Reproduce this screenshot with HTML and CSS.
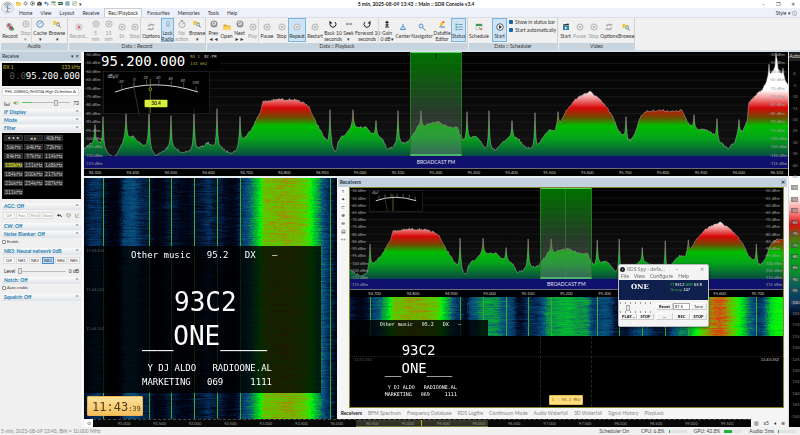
FILE: index.html
```html
<!DOCTYPE html>
<html lang="en">
<head>
    <meta charset="UTF-8">
    <meta name="viewport" content="width=device-width, initial-scale=1.0">
    <title>SDR Console</title>
    <link rel="stylesheet" href="styles.css">
</head>
<body>
    <svg class="defs" aria-hidden="true">
        <symbol id="i-disc" viewBox="0 0 16 16"><circle cx="8" cy="8" r="7" fill="#c4c4c4"/><circle cx="8" cy="8" r="5" fill="#f1f1f1" stroke="#aaa"/><rect x="6" y="6" width="4" height="4" fill="#bbb"/></symbol>
        <symbol id="i-dark" viewBox="0 0 16 16"><circle cx="8" cy="8" r="7" fill="#909090"/><circle cx="8" cy="7" r="4" fill="#eee"/><path d="M5 7l4-3v6z" fill="#888"/></symbol>
        <symbol id="i-rec" viewBox="0 0 16 16"><circle cx="8" cy="8" r="7" fill="#c4c4c4"/><circle cx="8" cy="8" r="5" fill="#eee"/><circle cx="8" cy="8" r="3" fill="#d66"/></symbol>
        <symbol id="i-recs" viewBox="0 0 16 16"><circle cx="6" cy="5" r="5" fill="#999"/><circle cx="6" cy="5" r="2" fill="#c22"/><circle cx="10" cy="10" r="5" fill="#777" stroke="#eee"/><circle cx="10" cy="10" r="2" fill="#e22"/><path d="M10 14h5v-4" stroke="#2a4" stroke-width="2" fill="none"/></symbol>
        <symbol id="i-clock" viewBox="0 0 16 16"><circle cx="8" cy="8" r="6.500" fill="#eef6fd" stroke="#5a8fbe" stroke-width="2"/><path d="M8 8l3-4M8 8H5" stroke="#357" fill="none"/></symbol>
        <symbol id="i-gclock" viewBox="0 0 16 16"><circle cx="8" cy="9" r="6" fill="#eee" stroke="#aaa" stroke-width="2"/><path d="M8 9l3-3M6 1h4" stroke="#999" stroke-width="2" fill="none"/></symbol>
        <symbol id="i-browse" viewBox="0 0 16 16"><path d="M1 2h5l1 2h6v6H1z" fill="#f1c232"/><path d="M5 5h9l-3 6H4z" fill="#ffdf70"/><circle cx="10" cy="9" r="3" fill="#cfe6fa" stroke="#48c" stroke-width="1.500"/><path d="M12 11l3 4" stroke="#a63" stroke-width="2"/></symbol>
        <symbol id="i-folder" viewBox="0 0 16 16"><path d="M1 3h5l2 2h7v9H1z" fill="#e0a82c"/><path d="M1 7h14v7H1z" fill="#ffd35c"/></symbol>
        <symbol id="i-loop" viewBox="0 0 16 16"><path d="M3 7a5 5 0 0 1 9-2M13 9a5 5 0 0 1-9 2" fill="none" stroke="#aaa" stroke-width="3"/><path d="M10 5h5V1zM6 11H1v4z" fill="#aaa"/></symbol>
        <symbol id="i-lock" viewBox="0 0 16 16"><path d="M5 8V5a3 3 0 0 1 6 0v3" fill="none" stroke="#9bb" stroke-width="2"/><rect x="4" y="7" width="8" height="7" fill="#adc3d0"/></symbol>
        <symbol id="i-ccw" viewBox="0 0 16 16"><path d="M4 4a6 6 0 1 0 8 0" fill="none" stroke="#222" stroke-width="2"/><path d="M1 1v6h6z" fill="#222"/></symbol>
        <symbol id="i-cw" viewBox="0 0 16 16"><path d="M12 4a6 6 0 1 1-8 0" fill="none" stroke="#222" stroke-width="2"/><path d="M15 1v6H9z" fill="#222"/></symbol>
        <symbol id="i-seek" viewBox="0 0 16 16"><path d="M1 8l4-3v6zM15 8l-4-3v6z" fill="#888"/><path d="M4 8h8" stroke="#888" stroke-width="2"/></symbol>
        <symbol id="i-gain" viewBox="0 0 16 16"><path d="M8 1l4 5H9v3h3l-4 4-4-4h3V6H4z" fill="#222"/><path d="M4 14h8" stroke="#222" stroke-width="2"/></symbol>
        <symbol id="i-center" viewBox="0 0 16 16"><path d="M8 2v7M2 13c3 0 3-7 6-7s3 7 6 7z" stroke="#5b9bd5" fill="#cfe2f5" stroke-width="2"/></symbol>
        <symbol id="i-find" viewBox="0 0 16 16"><circle cx="6" cy="6" r="4" fill="#d8ebfa" stroke="#5b9bd5" stroke-width="2"/><path d="M9 9l6 6" stroke="#5577a0" stroke-width="2"/></symbol>
        <symbol id="i-edit" viewBox="0 0 16 16"><path d="M3 13l2-7 6-4 2 2-5 8z" fill="#f6c026"/><path d="M3 14h11" stroke="#38b" stroke-width="2"/><circle cx="11" cy="4" r="2" fill="#e55"/></symbol>
        <symbol id="i-status" viewBox="0 0 16 16"><path d="M1 3h4M1 8h4M1 13h4" stroke="#4a8" stroke-width="3"/><path d="M7 3h8M7 8h8M7 13h8" stroke="#79b" stroke-width="2"/></symbol>
        <symbol id="i-cal" viewBox="0 0 16 16"><path d="M2 2h12v11H2z" fill="#e8f0e8" stroke="#8a8"/><path d="M2 2h12v4H2z" fill="#3b9a55"/><path d="M8 9l6 5" stroke="#c44" stroke-width="2"/></symbol>
        <symbol id="i-play" viewBox="0 0 16 16"><circle cx="8" cy="8" r="6.500" fill="#fff" stroke="#333" stroke-width="1.500"/><path d="M6 4l6 4-6 4z" fill="#333"/></symbol>
        <symbol id="i-film" viewBox="0 0 16 16"><path d="M2 5h12v9H2z" fill="#347ba0"/><path d="M2 3l11-2 1 3-12 1z" fill="#233"/><path d="M6 7l5 3-5 3z" fill="#cfe"/></symbol>
        <symbol id="i-gear" viewBox="0 0 16 16"><circle cx="8" cy="8" r="5" fill="none" stroke="#666" stroke-width="3" stroke-dasharray="3 1"/><circle cx="8" cy="8" r="3" fill="none" stroke="#666"/></symbol>
    </svg>

    <header class="titlebar">
        <div class="quick">
            <svg><use href="#i-folder"/></svg>
            <svg><use href="#i-gear"/></svg>
            <svg><use href="#i-play"/></svg>
            <svg viewBox="0 0 16 16"><path d="M1 5h3l2-3h4l2 3h3v9H1z" fill="#333"/><circle cx="8" cy="9" r="3" fill="#999"/></svg>
            <svg viewBox="0 0 16 16"><path d="M4 6h5a4 4 0 0 1 0 8" fill="none" stroke="#2a6fb5" stroke-width="3"/><path d="M0 6l6-5v10z" fill="#2a6fb5"/></svg>
            <svg><use href="#i-cal"/></svg>
            <svg viewBox="0 0 16 16"><path d="M1 3h14v10H1z" fill="#265b48"/><path d="M4 6h8v4H4z" fill="#9cd0b0"/></svg>
            <svg class="hot"><use href="#i-gear"/></svg>
            <svg viewBox="0 0 16 16"><path d="M2 2h12v12H2z" fill="#fff" stroke="#555"/><path d="M4 12l3-5 2 2 3-5" fill="none" stroke="#285" stroke-width="2"/></svg>
            <span>▾</span>
        </div>
        <h1>5 min, 2025-08-09 13:43 :: Main :: SDR Console v3.4</h1>
        <div class="winbtns">
            <button aria-label="Minimize">–</button>
            <button aria-label="Restore">❐</button>
            <button aria-label="Close">✕</button>
        </div>
    </header>

    <nav class="menu">
        <a href="#">Home</a>
        <a href="#">View</a>
        <a href="#">Layout</a>
        <a href="#">Receive</a>
        <a href="#" class="active">Rec/Playback</a>
        <a href="#">Favourites</a>
        <a href="#">Memories</a>
        <a href="#">Tools</a>
        <a href="#">Help</a>
        <button class="style-btn">Style ▾ ⓘ</button>
    </nav>
    <svg class="orb" viewBox="0 0 28 28"><circle cx="14" cy="14" r="13" fill="#e9e9ec" stroke="#b8b8be"/><path d="M14 23V9M10 23h8M9 10a6 6 0 0 1 10 0M6 9a9 9 0 0 1 16 0" stroke="#8c9298" stroke-width="2" fill="none"/><path d="M9 13h7M15 16h5" stroke="#5aa3d0" stroke-width="2"/></svg>

    <section class="ribbon">
        <div class="group audio">
            <div class="tools">
                <button class="w18"><svg><use href="#i-recs"/></svg>Record</button>
                <button class="w13 off"><svg><use href="#i-disc"/></svg>Stop<br>▾</button>
                <button class="w16 sep"><svg><use href="#i-clock"/></svg>Cache<br>▾</button>
                <button class="w18"><svg><use href="#i-browse"/></svg>Browse<br>▾</button>
            </div>
            <footer>Audio</footer>
        </div>
        <div class="group record">
            <div class="tools">
                <button class="w20 off"><svg><use href="#i-rec"/></svg>Record...</button>
                <button class="w13 off"><svg><use href="#i-disc"/></svg>5<br>min</button>
                <button class="w13 off"><svg><use href="#i-disc"/></svg>15<br>min</button>
                <button class="w13 off"><svg><use href="#i-disc"/></svg>1h</button>
                <button class="w13 off"><svg><use href="#i-disc"/></svg>Stop</button>
                <button class="w20 sep"><svg><use href="#i-loop"/></svg>Options</button>
                <button class="w13 on"><svg><use href="#i-lock"/></svg>Lock<br>Radio</button>
                <button class="w15 off"><svg><use href="#i-gclock"/></svg>No<br>action</button>
                <button class="w16"><svg><use href="#i-browse"/></svg>Browse<br>▾</button>
            </div>
            <footer>Data :: Record</footer>
        </div>
        <div class="group playback">
            <div class="tools">
                <button class="w13"><svg><use href="#i-dark"/></svg>Prev<br>◄◄</button>
                <button class="w13"><svg><use href="#i-folder"/></svg>Open</button>
                <button class="w13"><svg><use href="#i-dark"/></svg>Next<br>►►</button>
                <button class="w13 off"><svg><use href="#i-disc"/></svg>Play</button>
                <button class="w16 sep"><svg><use href="#i-disc"/></svg>Pause</button>
                <button class="w13"><svg><use href="#i-disc"/></svg>Stop</button>
                <button class="w18 on"><svg><use href="#i-disc"/></svg>Repeat</button>
                <button class="w18"><svg><use href="#i-disc"/></svg>Restart</button>
                <button class="w18"><svg><use href="#i-ccw"/></svg>Back 10<br>seconds</button>
                <button class="w13"><svg><use href="#i-seek"/></svg>Seek<br>▾</button>
                <button class="w24"><svg><use href="#i-cw"/></svg>Forward 10<br>seconds</button>
                <button class="w16 sep"><svg><use href="#i-gain"/></svg>Gain<br>0 dB▾</button>
                <button class="w16"><svg><use href="#i-center"/></svg>Center</button>
                <button class="w22"><svg><use href="#i-find"/></svg>Navigator</button>
                <button class="w18"><svg><use href="#i-edit"/></svg>Datafile<br>Editor</button>
                <button class="w15 on"><svg><use href="#i-status"/></svg>Status</button>
            </div>
            <footer>Data :: Playback</footer>
        </div>
        <div class="group scheduler">
            <div class="tools">
                <button class="w20"><svg><use href="#i-cal"/></svg>Schedule</button>
                <button class="w15 on gap"><svg><use href="#i-play"/></svg>Start</button>
                <div class="checks">
                    <label><input type="checkbox" checked>Show in status bar</label>
                    <label><input type="checkbox" checked>Start automatically</label>
                </div>
            </div>
            <footer>Data :: Scheduler</footer>
        </div>
        <div class="group video">
            <div class="tools">
                <button class="w13"><svg><use href="#i-film"/></svg>Start</button>
                <button class="w15 off"><svg><use href="#i-disc"/></svg>Pause</button>
                <button class="w13 off"><svg><use href="#i-disc"/></svg>Stop</button>
                <button class="w18"><svg><use href="#i-loop"/></svg>Options</button>
                <button class="w16"><svg><use href="#i-browse"/></svg>Browse</button>
            </div>
            <footer>Video</footer>
        </div>
    </section>

    <main class="workspace">
        <aside class="sidebar">
            <h2 class="pane-title">Receive <span>▾ ✕</span></h2>
            <div class="lcd">
                <div class="lcd-top"><span>RX 1</span><span>133 kHz</span></div>
                <div class="lcd-freq"><i>0.0</i>95.200.000</div>
            </div>
            <select class="device" aria-label="Audio device"><option>PHL 328B6Q (NVIDIA High Definition Audio)</option></select>
            <div class="volume">
                <svg viewBox="0 0 16 16"><path d="M2 14V5M6 14V9M10 14v-3M14 14V7M1 14h14" stroke="#666" stroke-width="2"/></svg>
                <svg viewBox="0 0 16 16"><path d="M1 6h4l4-4v12l-4-4H1z" fill="#8a9a60"/><path d="M11 5q3 3 0 6M13 3q4 5 0 10" fill="none" stroke="#8b4"/></svg>
                <input type="range" min="0" max="100" value="73" aria-label="Volume">
                <span>73</span>
            </div>
            <h3>IF Display <span>⌃</span></h3>
            <h3>Mode <span>⌃</span></h3>
            <h3>Filter <span>⌃</span></h3>
            <div class="filters">
                <button>• • •</button><button>◂ ▸</button><button>40kHz</button>
                <button>56kHz</button><button>64kHz</button><button>72kHz</button>
                <button>84kHz</button><button>97kHz</button><button>114kHz</button>
                <button class="sel">133kHz</button><button>151kHz</button><button>168kHz</button>
                <button>184kHz</button><button>200kHz</button><button>217kHz</button>
                <button>236kHz</button><button>254kHz</button><button>287kHz</button>
                <button>311kHz</button>
            </div>
            <h3>AGC: Off <span>⌃</span></h3>
            <div class="opts agc">
                <button>Off</button><button>Fast</button><button>Med</button><button>Slow</button>
                <svg viewBox="0 0 16 16"><path d="M5 7h5q4 0 4 6" fill="none" stroke="#222" stroke-width="3"/><path d="M0 7l6-5v10z" fill="#222"/></svg>
                <svg viewBox="0 0 16 16"><path d="M2 3h12v7H2zM6 14h4" fill="none" stroke="#888" stroke-width="2"/></svg>
                <svg viewBox="0 0 16 16"><path d="M2 2v12h12M5 11l8-9" fill="none" stroke="#888" stroke-width="2"/></svg>
            </div>
            <h3>CW: Off <span>⌃</span></h3>
            <h3>Noise Blanker: Off <span>⌃</span></h3>
            <label class="tick"><input type="checkbox">Enable</label>
            <h3>NR3: Neural network 0dB <span>⌃</span></h3>
            <div class="opts">
                <button>Off</button><button>NR1</button><button>NR2</button><button class="sel">NR3</button><button>NR4</button><button>NR5</button>
            </div>
            <div class="level">
                <label for="level">Level</label>
                <input id="level" type="range" min="0" max="100" value="0">
                <span>0 dB</span>
            </div>
            <h3>Notch: Off <span>⌃</span></h3>
            <label class="tick"><input type="checkbox">Auto enable</label>
            <h3>Squelch: Off <span>⌃</span></h3>
        </aside>

        <section class="content">
            <div class="display upper">
                <div class="plot" data-from="0" data-span="704">
                    <svg class="trace" preserveAspectRatio="none"></svg>
                    <div class="band">BROADCAST FM</div>
                    <div class="passband"><b>1</b></div>
                    <div class="dbm"></div>
                    <div class="dbm right"></div>
                    <div class="readout">
                        <strong>95.200.000</strong>
                        <div><p>RX 1 <em>BC-FM</em></p><p>133 kHz</p></div>
                    </div>
                    <svg class="meter" viewBox="0 0 107 43">
                        <path d="M10 21Q51 6 97 21" fill="none" stroke="#ddd"/>
                        <path d="M17 18v-5M30 15v-5M43 13V8M56 13V8M69 14V9M82 16v-5M95 20v-5" stroke="#999" stroke-width=".5"/>
                        <path d="M29 12l6 31" stroke="#666" stroke-width=".5"/>
                        <path d="M47 7v36" stroke="#aaa33a" stroke-width=".6"/>
                        <circle cx="47" cy="18" r="1.500" fill="#000" stroke="#e3e33c" stroke-width=".6"/>
                        <g><text x="13" y="12">-20</text><text x="29" y="9">0</text><text x="40" y="7">20</text><text x="53" y="7">40</text><text x="66" y="8">60</text><text x="79" y="10">80</text><text x="91" y="13">100</text></g>
                        <text class="unit" x="2" y="6">dBµV</text>
                        <rect x="41" y="29" width="24" height="8" rx="1" fill="#dbee3c"/>
                        <text class="val" x="53" y="35">30.4</text>
                    </svg>
                </div>
                <div class="axis" data-start="94300" data-step="100" data-count="19"></div>
            </div>

            <div class="lower">
                <div class="waterfall">
                    <canvas data-from="0" data-span="253" data-rows="241"></canvas>
                    <div class="rds">
                        <pre class="rds-line">Other music   95.2   DX   –</pre>
                        <pre class="rds-big">93C2</pre>
                        <pre class="rds-big name">__ONE___</pre>
                        <pre class="rds-line text"> Y DJ ALDO   RADIOONE.AL
MARKETING   069     1111</pre>
                    </div>
                    <div class="times"><span>11:43:40Z</span><span>11:44:22Z</span><span>11:44:16Z</span></div>
                    <div class="clock">11:43<small>:39</small></div>
                </div>

                <section class="receivers">
                    <h2 class="pane-title">Receivers <span>✕</span></h2>
                    <div class="rx-body">
                        <div class="rx-tools">
                            <button>≡</button><button>✦</button><button>⊂</button><button>⊕</button><button>⊖</button><button>▤</button><button>↔</button>
                        </div>
                        <div class="rx-frame">
                            <div class="display">
                                <div class="plot" data-from="136" data-span="433">
                                    <svg class="trace" preserveAspectRatio="none"></svg>
                                    <div class="band">BROADCAST FM</div>
                                    <div class="passband"></div>
                                    <div class="dbm"></div>
                                    <div class="dbm right"></div>
                                    <svg class="meter" viewBox="0 0 107 43">
                                        <path d="M10 21Q51 6 97 21" fill="none" stroke="#ddd" stroke-width="2"/>
                                        <path d="M17 18v-8M30 15V7M43 13V5M56 13V5M69 14V6M82 16V8M95 20v-8" stroke="#aaa"/>
                                        <path d="M29 12l6 31" stroke="#666"/>
                                        <path d="M47 7v36" stroke="#c8c030"/>
                                        <text class="unit" x="2" y="6">dBµV</text>
                                    </svg>
                                </div>
                                <div class="axis" data-start="94700" data-step="100" data-count="11"></div>
                            </div>
                            <div class="rx-fall">
                                <canvas data-from="136" data-span="433" data-rows="39"></canvas>
                            </div>
                            <div class="rx-blank">
                                <div class="guides"></div>
                                <div class="times"><span>11:43:35Z</span><span>11:43:35Z</span></div>
                                <div class="freq-tip">1 : 95.2 MHz</div>
                            </div>
                            <div class="rds small">
                                <pre class="rds-line">Other music   95.2   DX   –</pre>
                                <pre class="rds-big">93C2</pre>
                                <pre class="rds-big name">__ONE___</pre>
                                <pre class="rds-line text"> Y DJ ALDO   RADIOONE.AL
MARKETING   069     1111</pre>
                            </div>
                        </div>
                    </div>
                    <nav class="tabs">
                        <a href="#" class="active">Receivers</a>
                        <a href="#">BFM Spectrum</a>
                        <a href="#">Frequency Database</a>
                        <a href="#">RDS Logfile</a>
                        <a href="#">Continuum Mode</a>
                        <a href="#">Audio Waterfall</a>
                        <a href="#">3D Waterfall</a>
                        <a href="#">Signal History</a>
                        <a href="#">Playback</a>
                    </nav>
                </section>
            </div>

            <div class="navbar">
                <button aria-label="Centre">⊙</button>
                <div class="span-strip">
                    <div class="window"></div>
                    <div class="axis" data-start="91000" data-step="500" data-count="18"></div>
                </div>
                <div class="zoom"><button>▥</button><button>x5</button><button>♦</button><button>⊗</button></div>
            </div>
        </section>

        <div class="scale"><b>Auto</b></div>
    </main>

    <footer class="status">
        <span class="where">5 min, 2025-08-09 13:43, BW = 10.000 MHz</span>
        <span class="sched">Scheduler On</span>
        <span>CPU: 6.8%</span><progress class="cpu" max="100" value="7"></progress>
        <span>GPU: 42.8%</span><progress class="gpu" max="100" value="43"></progress>
        <span>Audio: 5ms</span><progress class="aud" max="100" value="8"></progress>
    </footer>

    <div class="spy">
        <div class="spy-title"><span class="dot"></span>RDS Spy - defa...<button>–</button><button>✕</button></div>
        <nav><a href="#">File</a><a href="#">View</a><a href="#">Configure</a><a href="#">Help</a></nav>
        <div class="spy-screen">
            <strong>ONE</strong>
            <div><p><i>PI</i> 93C2 <i>BER</i> 63 R</p><p><i>Group</i> 247</p></div>
        </div>
        <div class="spy-ctl">
            <div class="spy-left">
                <input type="range" min="0" max="100" value="22" aria-label="Position">
                <div><button>PLAY...</button><button>STOP</button></div>
            </div>
            <div class="spy-right">
                <button>Reset</button>
                <select aria-label="Frequency"><option>87.6</option></select>
                <button class="plain">Tune</button>
                <button>...</button>
                <button>REC</button>
                <button>STOP</button>
            </div>
        </div>
    </div>

    <script src="spectrum.js"></script>
</body>
</html>
```
FILE: styles.css
```css
* {
    box-sizing: border-box;
}
body {
    margin: 0;
    height: 100vh;
    display: flex;
    flex-direction: column;
    overflow: hidden;
    background: #f0f0f0;
    color: #333;
    font-family: Lato, "Noto Sans", sans-serif;
    font-size: 5px;
    line-height: 6px;
}
h1, h2, h3, p, pre {
    margin: 0;
    font-size: inherit;
}
button, select, input {
    margin: 0;
    padding: 0;
    border: 0;
    background: none;
    color: inherit;
    font: inherit;
    appearance: none;
}
a {
    color: inherit;
    text-decoration: none;
}
.defs {
    position: absolute;
    width: 0;
    height: 0;
}

/* title + menu */
.titlebar {
    display: grid;
    grid-template-columns: 1fr auto 1fr;
    align-items: center;
    height: 8px;
    background: #fff;
}
.quick {
    display: flex;
    gap: 2px;
    padding-left: 16px;
}
.quick svg {
    width: 5px;
    height: 5px;
}
.quick .hot {
    background: #bfe3ee;
}
.titlebar h1 {
    padding-left: 32px;
    color: #222;
    font-weight: 700;
}
.winbtns {
    display: flex;
    justify-content: flex-end;
    gap: 11px;
    padding-right: 5px;
}
.menu {
    display: flex;
    align-items: center;
    gap: 2px;
    height: 9px;
    padding: 0 3px 0 16px;
    background: #eef1fb;
}
.menu a {
    padding: 1px 3px 0;
    line-height: 8px;
}
.menu .active {
    background: #fafafa;
    border: 1px solid #c9ccd6;
    border-bottom: 0;
    padding-top: 0;
}
.style-btn {
    margin-left: auto;
}
.orb {
    position: absolute;
    left: 1px;
    top: 1px;
    width: 13px;
    height: 13px;
}

/* ribbon */
.ribbon {
    display: flex;
    flex: 0 0 33px;
    background: #f0f0f0;
    border-top: 1px solid #dcdfe6;
}
.group {
    display: flex;
    flex-direction: column;
    padding-left: 1px;
    border-right: 1px solid #d0d3d6;
}
.audio { width: 68px; }
.record { width: 138px; }
.playback { width: 262px; }
.scheduler { width: 90px; }
.video { width: 77px; }
.tools {
    display: flex;
    flex: 1;
    padding: 0 0 1px;
}
.tools button {
    display: block;
    flex: none;
    padding-top: 1px;
    text-align: center;
    white-space: nowrap;
    color: #333;
}
.tools button svg {
    display: block;
    width: 8px;
    height: 8px;
    margin: 1px auto 2px;
}
.tools .on {
    background: #cce4f5;
    box-shadow: inset 0 0 0 1px #7fb4da;
}
.tools .off {
    color: #999;
}
.tools .sep {
    box-shadow: -1px 0 #d8d8d8;
}
.tools .gap {
    margin: 0 2px 0 3px;
}
.w13 { width: 13px; }
.w15 { width: 15px; }
.w16 { width: 16px; }
.w18 { width: 18px; }
.w20 { width: 20px; }
.w22 { width: 22px; }
.w24 { width: 24px; }
.checks {
    display: flex;
    flex-direction: column;
    gap: 2px;
    padding-top: 1px;
    white-space: nowrap;
}
.checks label {
    display: flex;
    align-items: center;
    gap: 2px;
}
.checks input {
    width: 4px;
    height: 4px;
    background: #1665b0;
    border-radius: 1px;
}
.group footer {
    height: 7px;
    background: #c7d4de;
    text-align: center;
}
.video .tools {
    gap: 0;
}

/* main area */
.workspace {
    display: flex;
    flex: 1;
    min-height: 0;
    border-top: 2px solid #d4dfe8;
}
.pane-title {
    display: flex;
    justify-content: space-between;
    height: 9px;
    padding: 0 2px;
    background: #c3d1de;
    line-height: 9px;
    font-weight: 700;
    color: #234;
}
.sidebar {
    width: 83px;
    flex: none;
    background: #f0f0f0;
    border-right: 1px solid #fff;
    padding-right: 1px;
}
.sidebar .pane-title {
    font-weight: 400;
}
.sidebar > :not(.pane-title) {
    margin-left: 2px;
}
.lcd {
    height: 23px;
    margin-top: 2px;
    padding: 1px;
    background: #000;
}
.lcd-top {
    display: flex;
    justify-content: space-between;
    color: #c9b82e;
}
.lcd-freq {
    font: 9px/12px "DejaVu Sans Mono", monospace;
    color: #fff;
    text-align: right;
}
.lcd-freq i {
    font-style: normal;
    color: #555;
}
.device {
    display: block;
    width: 77px;
    height: 8px;
    margin-top: 2px;
    padding: 0 2px;
    background: #fff;
    border: 1px solid #ddd;
    font-size: 4px;
}
.volume, .level {
    display: flex;
    align-items: center;
    gap: 3px;
    height: 12px;
    padding: 0 2px;
}
.volume {
    height: 13px;
}
.volume svg {
    width: 6px;
    height: 6px;
}
.volume input, .level input {
    flex: 1;
    min-width: 0;
    height: 6px;
    background: linear-gradient(#bbb, #bbb) center / 100% 1px no-repeat;
}
.volume input {
    background: linear-gradient(90deg, #5c5 20%, #bbb 20%) center / 100% 1px no-repeat;
}
input[type=range]::-webkit-slider-thumb {
    appearance: none;
    width: 4px;
    height: 6px;
    background: #e8e8e8;
    border: 1px solid #aaa;
}
h3 {
    display: flex;
    justify-content: space-between;
    height: 7px;
    margin-bottom: 1px;
    padding: 0 2px;
    background: linear-gradient(#fafafa, #dfe3e8);
    line-height: 7px;
    color: #1c7bb0;
    font-weight: 700;
}
h3 span {
    color: #555;
}
.filters {
    display: grid;
    grid-template-columns: repeat(3, 19px);
    gap: 3px 1px;
    height: 66px;
    margin-bottom: 4px;
    padding: 2px;
    background: #000;
    align-content: start;
}
.filters button {
    height: 6px;
    background: #262626;
    border: 1px solid #333;
    line-height: 4px;
    color: #ccc;
}
.filters .sel {
    background: #55581c;
    color: #e8e840;
}
.opts {
    display: flex;
    gap: 1px;
    height: 9px;
    padding: 1px;
    align-items: center;
}
.opts button {
    width: 12px;
    height: 7px;
    background: #fafafa;
    border: 1px solid #ddd;
    font-size: 4px;
    line-height: 5px;
}
.opts .sel {
    background: #b9d7f0;
    border-color: #4b8fc8;
}
.agc {
    height: 12px;
    padding-bottom: 4px;
    color: #999;
}
.agc svg {
    width: 5px;
    height: 5px;
    margin-left: 3px;
}
.tick {
    display: flex;
    align-items: center;
    gap: 1px;
    height: 9px;
    padding-bottom: 3px;
    font-size: 4px;
}
.tick input {
    width: 4px;
    height: 4px;
    background: #fff;
    border: 1px solid #888;
    border-radius: 1px;
}

.content {
    flex: 1;
    min-width: 0;
    display: flex;
    flex-direction: column;
    padding-left: 1px;
}
.display {
    display: flex;
    flex-direction: column;
    min-height: 0;
    background: #000;
}
.upper {
    flex: 125;
}
.plot {
    position: relative;
    flex: 1;
    min-height: 0;
    background: linear-gradient(#000, #161616);
}
.trace {
    display: block;
    width: 100%;
    height: 100%;
}
.band {
    position: absolute;
    left: 0;
    right: 0;
    bottom: 0;
    height: 11%;
    display: flex;
    align-items: center;
    justify-content: center;
    background: #10106e;
    border-bottom: 1px solid #6a6a78;
    color: #e4e4f4;
}
.passband {
    position: absolute;
    left: 46.25%;
    width: 7.5%;
    top: 0;
    bottom: 11%;
    background: linear-gradient(90deg, transparent 49%, rgba(60, 150, 60, .5) 49% 51%, transparent 51%), linear-gradient(rgba(0, 125, 0, .9), rgba(90, 125, 95, .4) 60%, rgba(120, 140, 130, .4));
    border: 1px solid #1f7d1f;
    border-top: 1px solid #57d457;
    border-bottom: 2px solid #4db36a;
    text-align: center;
    color: #021;
}
.rx-frame .passband {
    left: 44%;
    width: 12%;
}
.dbm {
    position: absolute;
    left: 1px;
    top: 0;
    bottom: 0;
    padding: 1px 0 3px;
    display: flex;
    flex-direction: column;
    justify-content: space-between;
    font-size: 4px;
    line-height: 4px;
    color: #a0a0a0;
}
.dbm.right {
    left: auto;
    right: 1px;
}
.axis {
    display: flex;
    justify-content: space-between;
    flex: none;
    height: 7px;
    padding: 0 4px;
    font-size: 4px;
    line-height: 7px;
    color: #ccc;
    text-align: center;
}
.axis span {
    width: 14px;
}
.readout {
    position: absolute;
    left: 17px;
    top: 1px;
    display: flex;
    gap: 5px;
    padding-right: 4px;
    color: #fff;
    background: #000;
    font-family: "DejaVu Sans Mono", monospace;
}
.readout strong {
    font-size: 14px;
    line-height: 16px;
    font-weight: 400;
}
.readout p {
    margin-top: 1px;
    font-size: 4px;
    line-height: 6px;
    color: #b5b52a;
}
.readout em {
    margin-left: 2px;
    font-style: normal;
    color: #ccc;
}
.meter {
    position: absolute;
    left: 19px;
    top: 19px;
    width: 107px;
    height: 43px;
    background: rgba(0, 0, 0, .8);
    border: 1px solid #1c1c1c;
}
.meter text {
    font-size: 4px;
    font-style: italic;
    fill: #bbb;
}
.meter .unit {
    font-size: 5px;
}
.meter .val {
    font-size: 5px;
    font-style: normal;
    font-weight: 700;
    fill: #222;
    text-anchor: middle;
}

.lower {
    display: flex;
    flex: 242;
    min-height: 0;
    border-top: 2px solid #e8eef2;
}
.waterfall {
    position: relative;
    flex: 253;
    min-width: 0;
    background: #000;
}
.waterfall canvas, .rx-fall canvas {
    display: block;
    width: 100%;
    height: 100%;
}
.times {
    position: absolute;
    left: 2px;
    top: 70px;
    display: flex;
    flex-direction: column;
    gap: 33px;
    font-size: 4px;
    color: #555;
}
.rds {
    position: absolute;
    left: 0;
    top: 28%;
    width: 94%;
    height: 61%;
    padding-left: 58px;
    background: rgba(0, 0, 0, .82);
    color: #fff;
    font-family: "DejaVu Sans Mono", monospace;
}
.rds pre {
    font-family: inherit;
}
.rds-line {
    font-size: 9px;
    line-height: 14px;
    margin: 2px 0 0 -11px;
}
.rds-big {
    font-size: 26px;
    line-height: 34px;
    margin: 23px 0 0 32px;
}
.rds-big.name {
    margin: 0;
}
.rds-line.text {
    margin: 8px 0 0;
}
.clock {
    position: absolute;
    left: 3px;
    bottom: 3px;
    width: 56px;
    height: 20px;
    padding-left: 4px;
    background: linear-gradient(#ffe29a, #f5bf5c);
    border: 1px solid #e8b450;
    border-radius: 1px;
    color: #4a3c1c;
    font: 12px/20px "DejaVu Sans Mono", monospace;
}
.clock small {
    font-size: 7px;
}

/* receivers pane */
.receivers {
    flex: 450;
    min-width: 0;
    display: flex;
    flex-direction: column;
    padding: 0 1px;
    background: #f5f5f5;
}
.rx-body {
    display: flex;
    flex: 1;
    min-height: 0;
}
.rx-tools {
    width: 11px;
    display: flex;
    flex-direction: column;
    align-items: center;
    gap: 2px;
    padding-top: 1px;
}
.rx-tools button {
    width: 6px;
    height: 6px;
    background: #fff;
}
.rx-frame {
    position: relative;
    flex: 1;
    min-width: 0;
    margin-right: 3px;
    display: flex;
    flex-direction: column;
    border: 1px solid #84842a;
    background: #000;
}
.rx-frame .display {
    flex: 108;
}
.rx-frame .axis {
    padding: 0 18px;
}
.rx-frame .meter {
    top: 2px;
    width: 54px;
    height: 22px;
}
.rx-frame .meter .unit {
    font-size: 6px;
}
.rx-fall {
    flex: 39;
    min-height: 0;
}
.rx-blank {
    position: relative;
    flex: 70;
    display: flex;
    justify-content: center;
    align-items: flex-end;
}
.guides {
    position: absolute;
    left: 44%;
    width: 12%;
    top: 0;
    bottom: 0;
    border: 0 dashed #14300f;
    border-width: 0 1px;
    background: linear-gradient(90deg, transparent 49%, #14300f 49% 51%, transparent 51%);
}
.rx-blank .times {
    left: 0;
    right: 0;
    top: 20px;
    flex-direction: row;
    justify-content: space-between;
    padding: 0 4px;
    border-top: 1px dotted #222;
}
.rx-blank .times span:last-child {
    color: #ccc;
}
.freq-tip {
    position: relative;
    width: 34px;
    margin-bottom: 2px;
    background: #ffdc7c;
    border: 1px solid #e8bb50;
    border-radius: 1px;
    color: #8a6a20;
    font: 4px/8px "DejaVu Sans Mono", monospace;
    text-align: center;
}
.rds.small {
    top: 60%;
    width: 32%;
    height: 39%;
    padding-left: 35px;
    background: linear-gradient(rgba(0, 0, 0, .82) 22%, transparent 22%);
}
.small .rds-line {
    font-size: 5px;
    line-height: 7px;
    margin: 1px 0 0 -5px;
}
.small .rds-big {
    font-size: 14px;
    line-height: 18px;
    margin: 13px 0 0 17px;
}
.small .rds-big.name {
    margin: 0;
}
.small .rds-line.text {
    margin: 7px 0 0;
}
.tabs {
    display: flex;
    gap: 6px;
    height: 11px;
    padding-left: 3px;
    line-height: 11px;
    color: #888;
}
.tabs .active {
    color: #222;
    font-weight: 700;
}

.navbar {
    display: flex;
    height: 8px;
    background: #f4f4f4;
}
.navbar > button {
    width: 9px;
    background: #fff;
}
.span-strip {
    position: relative;
    flex: 1;
    background: #080808;
    border-top: 1px dashed #444;
}
.span-strip .axis {
    position: relative;
    padding: 0 17px 0 24px;
    color: #999;
}
.window {
    position: absolute;
    left: 40%;
    width: 20%;
    top: 0;
    bottom: 0;
    background: linear-gradient(90deg, transparent 49%, #b8b81c 49% 50%, transparent 50%), linear-gradient(#3a3a28, #2c2c2c);
    border-bottom: 1px solid #77772a;
}
.zoom {
    display: flex;
    width: 37px;
    justify-content: space-around;
}

/* colour scale */
.scale {
    width: 12px;
    flex: none;
    display: flex;
    flex-direction: column;
    justify-content: space-between;
    padding-bottom: 8px;
    border-left: 1px solid #ddd;
    background: linear-gradient(#050505 33%, #fff 33% 38%, #f9a0a0 42%, #e01010 46%, #6a6010 49%, #08b010 53%, #0a8a30 59%, #0a5560 63%, #083060 67%, #000 71%);
    text-align: center;
    font-size: 4px;
    line-height: 5px;
    color: #888;
}
.scale b {
    margin-bottom: 4px;
    padding: 2px 0;
    background: #222;
    font-size: 5px;
    font-weight: 400;
    color: #ddd;
}
.scale span {
    margin: 0 2px;
}
.scale .chip {
    background: rgba(70, 70, 70, .55);
    color: #ddd;
}

.status {
    display: flex;
    align-items: center;
    gap: 4px;
    height: 8px;
    padding: 0 4px 0 1px;
    color: #444;
}
.status .where {
    margin-right: auto;
    color: #888;
}
.status .sched {
    margin-right: 8px;
}
.status progress {
    width: 18px;
    height: 3px;
    margin-right: 3px;
    border: 0;
    appearance: none;
}
.status .aud {
    margin-right: 0;
}
progress::-webkit-progress-bar {
    background: #e2e2e2;
}
progress::-webkit-progress-value {
    background: #1cb53c;
}

/* floating RDS window */
.spy {
    position: absolute;
    left: 77.25%;
    top: 264px;
    width: 91px;
    height: 63px;
    background: #f4f4f4;
    border: 1px solid #bbb;
    border-radius: 2px;
    font-family: "Noto Sans", sans-serif;
    box-shadow: 0 1px 3px rgba(0, 0, 0, .5);
}
.spy-title {
    display: flex;
    align-items: center;
    gap: 2px;
    height: 8px;
    padding: 0 4px 0 1px;
    color: #777;
}
.spy-title button:nth-of-type(1) {
    margin-left: auto;
    margin-right: 20px;
}
.dot {
    width: 5px;
    height: 5px;
    border: 2px solid #222;
    border-radius: 50%;
}
.spy nav {
    display: flex;
    gap: 5px;
    height: 7px;
    padding-left: 2px;
    color: #666;
}
.spy-screen {
    display: flex;
    justify-content: space-between;
    height: 20px;
    padding: 2px 6px 0 12px;
    background: #10204e;
    color: #fff;
}
.spy-screen strong {
    font: 700 7px/10px "DejaVu Serif", serif;
}
.spy-screen div {
    font-size: 4px;
    line-height: 5px;
}
.spy-screen i {
    font-style: normal;
    color: #2bb84a;
}
.spy-ctl {
    display: flex;
    gap: 2px;
    padding: 2px 1px;
}
.spy-left {
    width: 34px;
}
.spy-left input {
    display: block;
    width: 32px;
    height: 11px;
    background: repeating-linear-gradient(90deg, #999 0 1px, transparent 1px 5px) top / 100% 2px no-repeat, repeating-linear-gradient(90deg, #999 0 1px, transparent 1px 5px) bottom / 100% 2px no-repeat;
}
.spy-left div {
    display: flex;
}
.spy-ctl button {
    flex: 1;
    height: 7px;
    background: #f2f2f2;
    border: 1px solid #ccc;
    border-left-color: #fff;
    border-top-color: #fff;
    font-size: 4px;
    line-height: 5px;
    font-weight: 700;
    color: #222;
}
.spy-ctl .plain {
    font-weight: 400;
}
.spy-right {
    flex: 1;
    display: grid;
    grid-template-columns: repeat(3, 1fr);
    row-gap: 3px;
    padding-top: 1px;
    align-content: start;
}
.spy-right select {
    height: 7px;
    padding: 0 1px;
    background: #fff;
    border: 1px solid #aaa;
    font-size: 4px;
}
```
FILE: spectrum.js
```js
// noise floor and carriers, in plot units (704 x 118)
const floor = [[0,98],[6,92],[15,90],[19,96],[21,98],[26,103],[30,106],[34,101],[40,88],[44,86],[49,85],[54,90],[59,94],[64,94],[67,98],[72,104],[79,100],[84,96],[90,96],[96,100],[104,101],[108,98],[119,95],[124,91],[131,96],[136,95],[142,100],[149,101],[153,98],[158,88],[162,85],[167,78],[172,69],[176,61],[179,50],[186,49],[196,47.5],[209,48],[219,51],[225,55],[229,65],[236,78],[240,86],[244,91],[246,91],[248,96],[251,101],[253,98],[254,91],[257,85],[261,83],[268,75],[273,75],[283,76],[289,83],[294,84],[299,88],[303,98],[308,96],[314,90],[317,92],[323,91],[328,85],[334,75],[341,74],[353,70],[364,75],[373,76],[379,89],[385,87],[391,85],[397,90],[401,97],[408,97],[411,99],[418,92],[424,87],[433,86],[441,96],[449,97],[453,95],[459,85],[466,78],[471,79],[475,73],[481,61],[491,48],[498,43],[506,40],[513,45],[523,56],[529,66],[534,78],[540,85],[544,89],[548,88],[553,76],[556,66],[561,60],[576,58.5],[591,60],[598,58.5],[603,70],[608,75],[612,77],[623,79],[630,83],[635,90],[644,97],[651,91],[654,81],[658,80],[663,70],[665,51],[669,46],[678,38],[686,25],[691,15],[692,0],[694,16],[699,25],[704,34]]
const spikes = [[11,73],[19,65],[42,60],[65,53],[87,64],[110,57],[133,57],[156,65],[246,58],[269,58],[292,69],[314,59],[337,59],[383,60],[405,59],[428,69],[451,61],[474,60],[542,65],[610,63],[633,67],[655,68],[685,12],[699,16]]

let seed = 7
function rnd() {
    seed = (seed * 16807) % 2147483647
    return seed / 2147483647
}

function level(x) {
    for (let i = 1; i < floor.length; i++) {
        const [x0, y0] = floor[i - 1]
        const [x1, y1] = floor[i]
        if (x <= x1) return y0 + (y1 - y0) * (x - x0) / (x1 - x0)
    }
    return floor[floor.length - 1][1]
}

const jitter = Array.from({ length: 706 }, () => (rnd() - .5) * 2)

function tracePath() {
    let d = ''
    for (let x = 0; x <= 704; x += .5) {
        const base = level(x) + jitter[Math.floor(x)]
        let y = base
        for (const [sx, top] of spikes) {
            const dist = Math.abs(x - sx)
            if (dist < 4) y = Math.min(y, base - (base - top) * Math.exp(-dist * 1.2))
        }
        d += (d ? 'L' : 'M') + x + ' ' + y.toFixed(1)
    }
    return d
}

const line = tracePath()
document.querySelectorAll('.plot').forEach((plot, n) => {
    const svg = plot.querySelector('.trace')
    svg.setAttribute('viewBox', `${plot.dataset.from} 0 ${plot.dataset.span} 118`)
    let grid = ''
    for (let y = 3; y < 106; y += 8.42) grid += `M0 ${y}H704`
    svg.innerHTML = `
        <linearGradient id="heat${n}" gradientUnits="userSpaceOnUse" x1="0" y1="0" x2="0" y2="106">
            <stop offset=".36" stop-color="#fff"/><stop offset=".43" stop-color="#f3a0a0"/>
            <stop offset=".53" stop-color="#d80808"/><stop offset=".62" stop-color="#704a00"/>
            <stop offset=".7" stop-color="#00bc00"/><stop offset=".82" stop-color="#04a41a"/>
            <stop offset="1" stop-color="#0a4444"/>
        </linearGradient>
        <path d="${grid}" stroke="#2a2a2a" stroke-width=".5"/>
        <path d="${line}V118H0Z" fill="url(#heat${n})"/>
        <path d="${line}" fill="none" stroke="#ccc" stroke-opacity=".7" stroke-width=".6"/>`
})

document.querySelectorAll('.dbm').forEach(el => {
    for (let v = 50; v <= 115; v += 5) el.innerHTML += `<span>-${v} dBm</span>`
})

document.querySelectorAll('.axis').forEach(el => {
    const { start, step, count } = el.dataset
    for (let i = 0; i < +count; i++) {
        el.innerHTML += `<span>${((+start + i * step) / 1000).toFixed(3)}</span>`
    }
})

const scale = document.querySelector('.scale')
for (let i = 0; i <= 30; i++) {
    scale.innerHTML += `<span class="${i > 9 && i < 21 ? 'chip' : ''}">${i ? -5 * i : 0}</span>`
}

// waterfall palette, by height above the floor
const palette = [[0,0,2,12],[6,0,8,28],[12,4,34,72],[18,6,66,116],[24,10,92,120],[30,12,150,66],[38,0,200,40],[46,0,250,10],[51,70,215,0],[57,118,180,0],[61,170,130,10],[66,215,70,15]]
function color(h) {
    h = Math.max(0, Math.min(65.9, h))
    let i = 1
    while (palette[i][0] < h) i++
    const a = palette[i - 1], b = palette[i]
    const t = (h - a[0]) / (b[0] - a[0])
    return [1, 2, 3].map(k => a[k] + (b[k] - a[k]) * t)
}

document.querySelectorAll('canvas').forEach(canvas => {
    const from = +canvas.dataset.from
    const w = canvas.width = +canvas.dataset.span
    const h = canvas.height = +canvas.dataset.rows
    const ctx = canvas.getContext('2d')
    const img = ctx.createImageData(w, h)
    for (let y = 0; y < h; y++) {
        let drift = 0
        for (let x = 0; x < w; x++) {
            drift = drift * .85 + (rnd() - .5) * 3.5
            const base = 105 - level(x + from + (rnd() - .5) * 3)
            let c = color(base + drift)
            if (spikes.some(s => s[0] === x + from && s[0] !== 11 && s[0] !== 42)) c = [60, 170, 50]
            img.data.set([c[0], c[1], c[2], 255], (y * w + x) * 4)
        }
    }
    ctx.putImageData(img, 0, 0)
})
```
